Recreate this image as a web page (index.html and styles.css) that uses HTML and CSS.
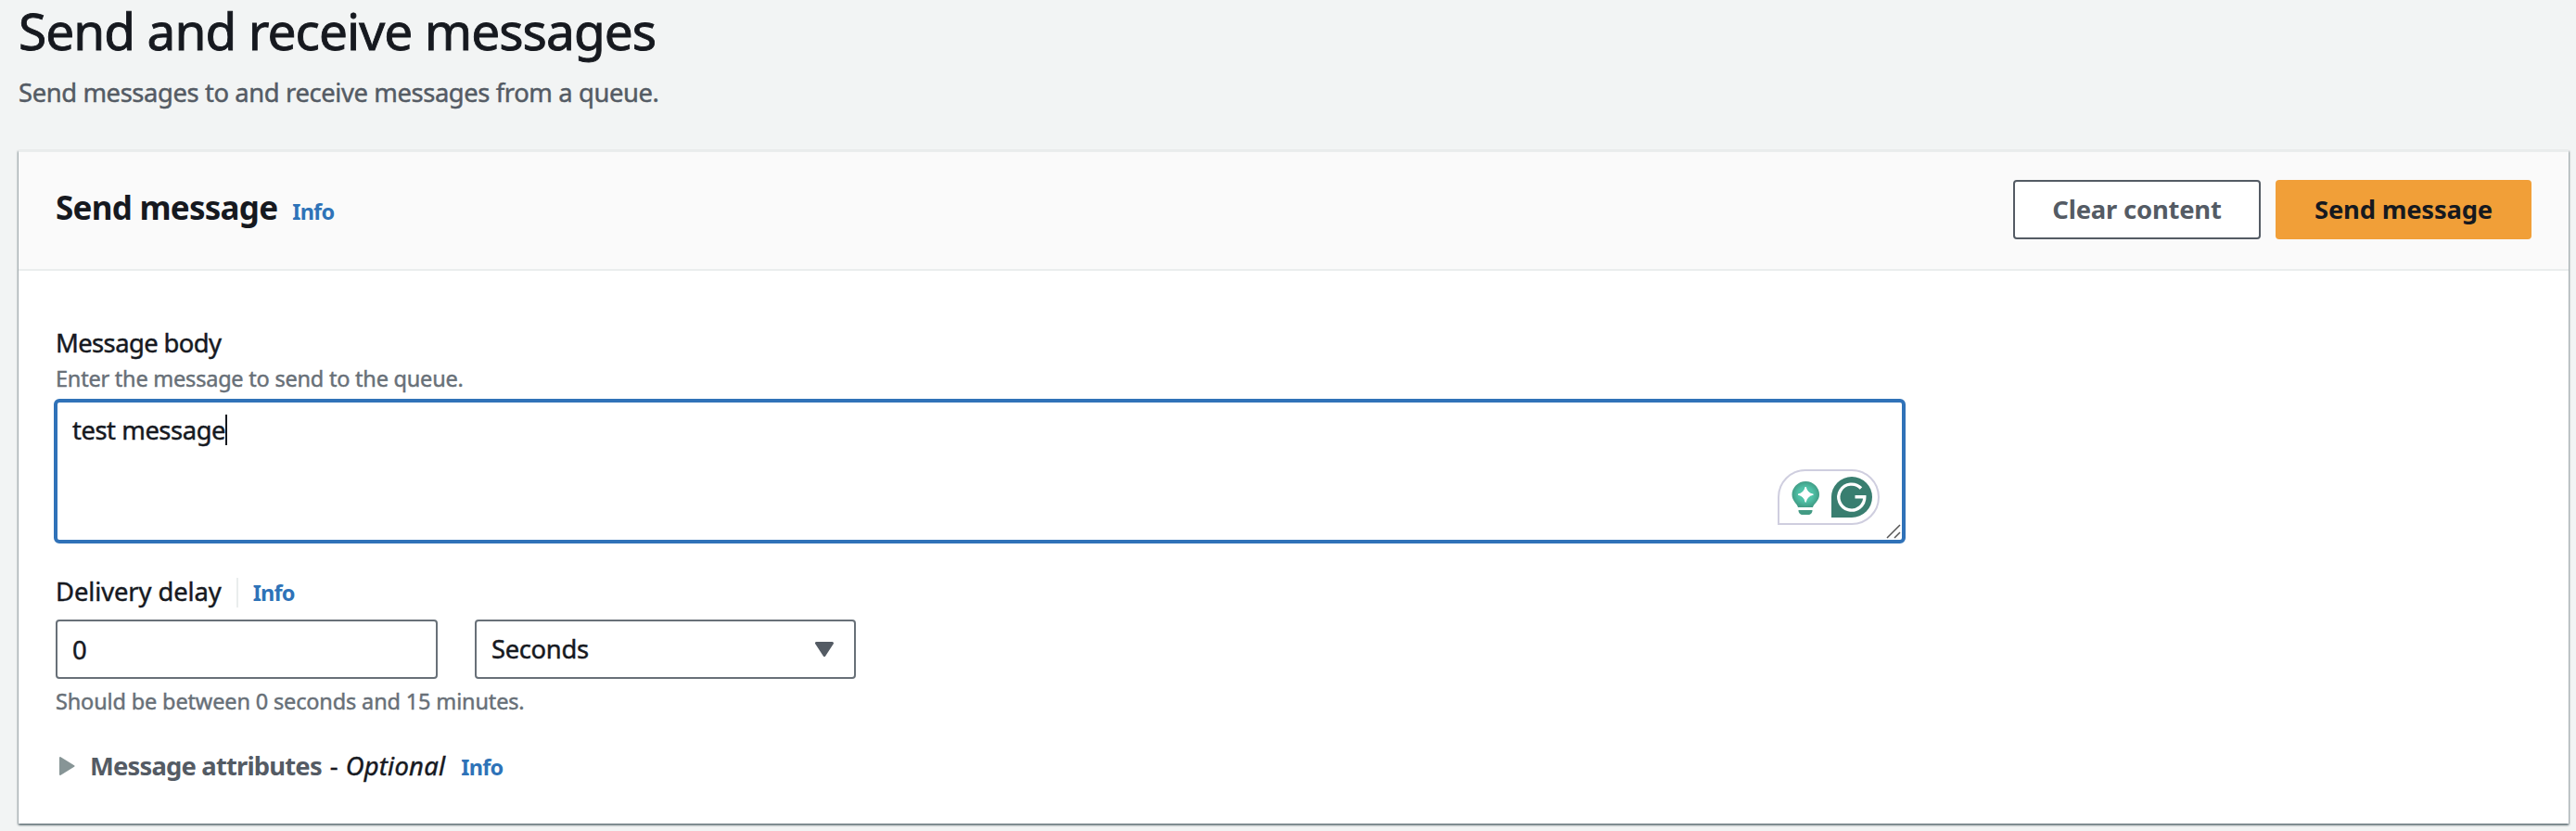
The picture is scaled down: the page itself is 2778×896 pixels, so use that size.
FILE: index.html
```html
<!DOCTYPE html>
<html lang="en">
<head>
<meta charset="utf-8">
<title>Send and receive messages</title>
<link rel="stylesheet" href="styles.css">
</head>
<body>
<header class="page-header">
  <h1 class="page-title">Send and receive messages</h1>
  <p class="page-description">Send messages to and receive messages from a queue.</p>
</header>
<main class="panel">
  <div class="panel-header">
    <div class="panel-heading">
      <h2 class="panel-title">Send message</h2>
      <a class="info">Info</a>
    </div>
    <div class="actions">
      <button class="button button-normal">Clear content</button>
      <button class="button button-primary">Send message</button>
    </div>
  </div>
  <div class="panel-body">
    <div class="label label-body">Message body</div>
    <div class="hint hint-body">Enter the message to send to the queue.</div>
    <div class="textarea">
      <span class="textarea-value">test message</span><span class="caret"></span>
      <svg class="assistant" width="110" height="60" viewBox="0 0 110 60">
        <defs>
          <radialGradient id="bulb" cx="50%" cy="50%" r="50%">
            <stop offset="0" stop-color="#55cbb0"/>
            <stop offset=".55" stop-color="#4fc0a6"/>
            <stop offset="1" stop-color="#419d86"/>
          </radialGradient>
        </defs>
        <path d="M1 59V30A29 29 0 0 1 30 1H80A29 29 0 0 1 80 59Z" fill="#fff" stroke="#cfcedf" stroke-width="2"/>
        <path d="M22 41C21 37 15.500 34 15.500 27.500A14.750 14.500 0 0 1 45 27.500C45 34 39 37 38 41Z" fill="url(#bulb)"/>
        <path d="M22.500 44H37.500C37.500 47.500 35.500 49 33 49H27C24.500 49 22.500 47.500 22.500 44Z" fill="#439b84"/>
        <path d="M30.200 19Q31.800 25.600 38.400 27.200Q31.800 28.800 30.200 35.400Q28.600 28.800 22 27.200Q28.600 25.600 30.200 19Z" fill="#fff" stroke="#fff" stroke-linejoin="round"/>
        <path d="M58 52V30A22 22 0 1 1 80 52Z" fill="#397e70"/>
        <path d="M90 20.500A14 14 0 1 0 93.800 29.800H83.500" fill="none" stroke="#fff" stroke-width="3.400"/>
      </svg>
      <svg class="resize-grip" width="16" height="16" viewBox="0 0 16 16">
        <path d="M1 15L15 1M9 15L15 9" stroke="#555" stroke-width="1.500" fill="none"/>
      </svg>
    </div>
    <div class="delay-label">
      <span class="label label-delay">Delivery delay</span>
      <span class="divider"></span>
      <a class="info">Info</a>
    </div>
    <div class="delay-fields">
      <div class="field field-number">0</div>
      <div class="field field-select">
        <span>Seconds</span>
        <svg class="select-arrow" width="20" height="16" viewBox="0 0 20 16"><path d="M1.500 1.500H18.500L10 14.500Z" fill="#545b64" stroke="#545b64" stroke-width="3" stroke-linejoin="round"/></svg>
      </div>
    </div>
    <div class="hint hint-delay">Should be between 0 seconds and 15 minutes.</div>
    <div class="attributes">
      <svg class="expand-arrow" width="17" height="20" viewBox="0 0 17 20"><path d="M1 1L15.500 10L1 19Z" fill="#879596" stroke="#879596" stroke-width="2" stroke-linejoin="round"/></svg>
      <span class="attributes-title">Message attributes</span>
      <span class="attributes-dash">-</span>
      <span class="attributes-optional">Optional</span>
      <a class="info">Info</a>
    </div>
  </div>
</main>
</body>
</html>
```

FILE: styles.css
```css
* { box-sizing: border-box; }
body {
  margin: 0;
  padding: 3px 8px 0 20px;
  height: 896px;
  overflow: hidden;
  background: #f2f4f4;
  color: #16191f;
  font-family: "Noto Sans", sans-serif;
  font-size: 27.4px;
  line-height: 32px;
  white-space: nowrap;
  -webkit-text-stroke: .45px currentColor;
}
.page-header { height: 159px; }
.page-title {
  margin: 0 0 17px;
  font-size: 55px;
  line-height: 60px;
  font-weight: 400;
  letter-spacing: -.95px;
  -webkit-text-stroke-width: .9px;
}
.page-description {
  margin: 0;
  line-height: 40px;
  letter-spacing: -.4px;
  color: #545b64;
}
.panel {
  height: 726px;
  background: #fff;
  border-top: 2px solid #eaeded;
  box-shadow: 0 2px 2px 0 rgba(0, 28, 36, .35), 1px 1px 2px 0 rgba(0, 28, 36, .3), -1px 1px 2px 0 rgba(0, 28, 36, .3);
}
.panel-header {
  display: flex;
  justify-content: space-between;
  align-items: flex-start;
  height: 128px;
  padding: 30px 40px 0;
  background: #fafafa;
  border-bottom: 2px solid #eaeded;
}
.panel-heading {
  display: flex;
  align-items: baseline;
  gap: 16px;
  margin-top: 8px;
}
.panel-title {
  margin: 0;
  font-size: 35px;
  line-height: 44px;
  letter-spacing: -.75px;
  -webkit-text-stroke-width: 0;
}
.info {
  font-size: 23.5px;
  line-height: 24px;
  font-weight: 700;
  letter-spacing: -.8px;
  color: #2e73b8;
  -webkit-text-stroke: 0;
}
.actions { display: flex; gap: 16px; }
.button {
  height: 64px;
  padding: 0;
  border-radius: 4px;
  font: 700 27.4px/32px "Noto Sans", sans-serif;
  letter-spacing: -.2px;
  -webkit-text-stroke: 0;
}
.button-normal {
  width: 267px;
  border: 2px solid #545b64;
  background: #fff;
  color: #545b64;
}
.button-primary {
  width: 276px;
  border: 0;
  background: #f19f38;
  color: #16191f;
}
.panel-body { padding: 62px 40px 0; }
.label-body { letter-spacing: -.6px; }
.label-delay { letter-spacing: -.1px; }
.hint {
  font-size: 23.5px;
  color: #687078;
}
.hint-body { margin-top: 6px; letter-spacing: -.22px; }
.hint-delay { margin-top: 8px; letter-spacing: -.15px; }
.textarea {
  position: relative;
  display: flex;
  align-items: flex-start;
  width: 1997px;
  height: 156px;
  margin: 6px 0 0 -2px;
  padding: 13px 16px;
  border: 4px solid #3072b8;
  border-radius: 6px;
  letter-spacing: -.45px;
}
.textarea-value { line-height: 34px; }
.caret {
  width: 2px;
  height: 33px;
  background: #16191f;
}
.assistant {
  position: absolute;
  right: 24px;
  bottom: 16px;
}
.resize-grip {
  position: absolute;
  right: 1px;
  bottom: 1px;
}
.delay-label {
  display: flex;
  align-items: baseline;
  height: 32px;
  margin-top: 36px;
}
.divider {
  align-self: stretch;
  width: 2px;
  margin: 1px 16px -1px 16px;
  background: #eaeded;
}
.delay-fields {
  display: flex;
  gap: 40px;
  margin-top: 14px;
}
.field {
  display: flex;
  align-items: center;
  height: 64px;
  border: 2px solid #687078;
  border-radius: 4px;
  letter-spacing: -.35px;
}
.field-number { width: 412px; padding: 1px 16px 0; }
.field-select {
  justify-content: space-between;
  width: 411px;
  padding: 0 22px 0 16px;
}
.attributes {
  display: flex;
  align-items: baseline;
  height: 32px;
  margin-top: 38px;
}
.expand-arrow { align-self: center; margin: 0 16px 0 4px; }
.attributes-title {
  font-weight: 700;
  letter-spacing: -.82px;
  color: #545b64;
  -webkit-text-stroke: 0;
}
.attributes-dash { margin: 0 8px 0 9px; }
.attributes-optional { font-style: italic; letter-spacing: .25px; }
.attributes .info { margin-left: 17px; }
```
